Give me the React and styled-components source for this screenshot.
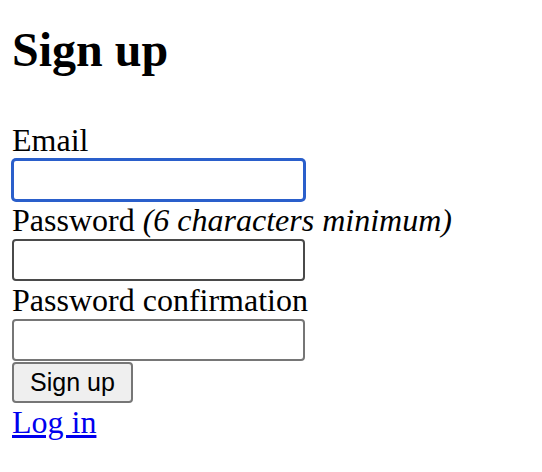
import React from 'react';
import styled, {createGlobalStyle} from 'styled-components';

const GlobalStyle = createGlobalStyle`
    body {
        margin: 0;
        background: #ffffff;
        font-family: "Liberation Serif", "Times New Roman", serif;
        color: #000000;
    }
`

const Page = styled.div`
    padding: 0 12px 12px 12px;
`

const Title = styled.h1`
    margin: 22px 0 44px 0;
    font-size: 48px;
    line-height: 55px;
    font-weight: bold;
`

const Form = styled.form`
    display: flex;
    flex-direction: column;
    align-items: flex-start;
`

const Field = styled.div`
    display: flex;
    flex-direction: column;
    align-items: flex-start;
`

const Label = styled.label`
    display: block;
    font-size: 32px;
    line-height: 38px;
    white-space: nowrap;
`

const Hint = styled.em`
    font-style: italic;
`

const borderColors = {
    focus: '#2a5fcb',
    hover: '#4a4a4a',
    idle: '#767676',
}

const Input = styled.input`
    box-sizing: border-box;
    width: 293px;
    height: 42px;
    margin: 0;
    padding: 2px 6px;
    font-size: 22px;
    font-family: "Liberation Sans", Arial, sans-serif;
    background: #ffffff;
    border: 2px solid ${props => borderColors[props.$tone || 'idle']};
    box-shadow: ${props => props.$tone === 'focus' ? '0 0 0 1px #2a5fcb' : 'none'};
    border-radius: 4px;
    outline: none;
`

const Actions = styled.div`
    margin-top: 1px;
`

const Button = styled.button`
    box-sizing: border-box;
    width: 121px;
    height: 41px;
    margin: 0;
    padding: 0;
    font-family: "Liberation Sans", Arial, sans-serif;
    font-size: 25px;
    color: #000000;
    background: #efefef;
    border: 2px solid #767676;
    border-radius: 4px;
`

const LoginLink = styled.a`
    display: inline-block;
    font-size: 32px;
    line-height: 38px;
    color: #0000ee;
    text-decoration: underline;
`

const SignUp = () => {
    return (
        <>
            <GlobalStyle />
            <Page>
                <Title>Sign up</Title>
                <Form onSubmit={e => e.preventDefault()}>
                    <Field>
                        <Label htmlFor="email">Email</Label>
                        <Input id="email" type="email" $tone="focus" />
                    </Field>
                    <Field>
                        <Label htmlFor="password">Password <Hint>(6 characters minimum)</Hint></Label>
                        <Input id="password" type="password" $tone="hover" />
                    </Field>
                    <Field>
                        <Label htmlFor="password_confirmation">Password confirmation</Label>
                        <Input id="password_confirmation" type="password" />
                    </Field>
                    <Actions>
                        <Button type="submit">Sign up</Button>
                    </Actions>
                </Form>
                <LoginLink href="#">Log in</LoginLink>
            </Page>
        </>
    )
}

export default SignUp;
